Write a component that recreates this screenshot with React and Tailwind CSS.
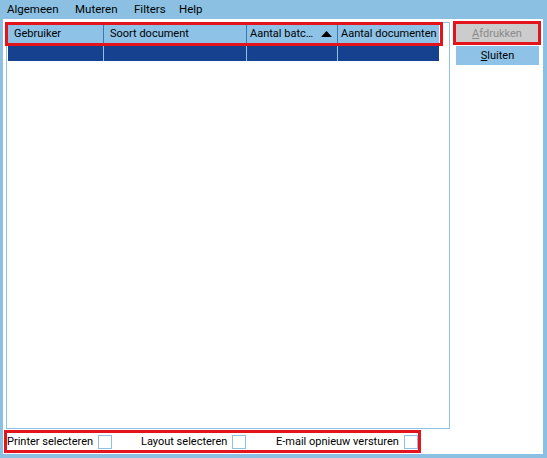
import React from 'react';

const font = { fontFamily: 'Roboto, Lato, sans-serif' };

const columns = [
    { label: 'Gebruiker', width: 'w-[96px]', pad: 'pl-[6px]' },
    { label: 'Soort document', width: 'w-[143px]', pad: 'pl-[6px]' },
    { label: 'Aantal batc…', width: 'w-[91px]', pad: 'pl-[3px]', sorted: true },
    { label: 'Aantal documenten', width: 'w-[101px]', pad: 'pl-[3px]' },
];

const Checkbox = () => (
    <span className="inline-block w-[14px] h-[14px] border border-[#8ec1e4] bg-white ml-[5px] shrink-0 -translate-y-[1px]" />
);

export default function App() {
    return (
        <div className="relative w-[547px] h-[458px] bg-[#8cc0e3] text-[11.5px] text-black overflow-hidden" style={font}>
            {/* Menu */}
            <div className="flex h-[19px] items-center pt-[1px]">
                <div className="ml-[7px] w-[68px]">Algemeen</div>
                <div className="w-[59px]">Muteren</div>
                <div className="w-[45px]">Filters</div>
                <div>Help</div>
            </div>

            {/* Inhoud */}
            <div className="ml-[3px] w-[540px] h-[435px] bg-white flex flex-col text-[11px]">
                <div className="flex">
                    <div className="mt-[3px] ml-[3px] w-[444px] h-[407px] border border-[#8ec1e4] pl-[1px]">
                        <div className="flex h-[22px] bg-[#8ec2e6] w-[431px]">
                            {columns.map((col, i) => (
                                <div
                                    key={col.label}
                                    className={`${col.width} ${col.pad} flex items-center whitespace-nowrap overflow-hidden ${i < columns.length - 1 ? 'border-r border-[#3a7ab3]' : ''}`}
                                >
                                    <span>{col.label}</span>
                                    {col.sorted && (
                                        <svg width="11" height="6" viewBox="0 0 11 6" className="ml-[8px] shrink-0">
                                            <polygon points="5.5,0 11,6 0,6" fill="#000" />
                                        </svg>
                                    )}
                                </div>
                            ))}
                        </div>
                        <div className="flex h-[15px] mt-[1px] bg-[#15418e] w-[431px]">
                            {columns.map((col, i) => (
                                <div
                                    key={col.label}
                                    className={`${col.width} ${i < columns.length - 1 ? 'border-r border-[#8ec1e4]' : ''}`}
                                />
                            ))}
                        </div>
                    </div>

                    <div className="ml-[6px] mt-[5px] flex flex-col gap-[3px]">
                        <div className="w-[82px] h-[19px] bg-[#cccccc] text-[#8a8a8a] flex items-center justify-center pt-[1px]">
                            <span><span className="underline">A</span>fdrukken</span>
                        </div>
                        <div className="w-[83px] h-[19px] bg-[#8ec2e6] flex items-center justify-center pt-[2px]">
                            <span><span className="underline">S</span>luiten</span>
                        </div>
                    </div>
                </div>

                <div className="flex items-center h-[24px] mt-[2px]">
                    <div className="ml-[4px] w-[134px] flex items-center whitespace-nowrap">
                        Printer selecteren<Checkbox />
                    </div>
                    <div className="w-[135px] flex items-center whitespace-nowrap">
                        Layout selecteren<Checkbox />
                    </div>
                    <div className="flex items-center whitespace-nowrap">
                        E-mail opnieuw versturen<Checkbox />
                    </div>
                </div>
            </div>

            {/* Markeringen */}
            <div className="absolute left-[5px] top-[22px] w-[438px] h-[24px] border-[3px] border-[#e3141c]" />
            <div className="absolute left-[453px] top-[21px] w-[88px] h-[24px] border-[3px] border-[#e3141c]" />
            <div className="absolute left-[4px] top-[430px] w-[417px] h-[23px] border-[3px] border-[#e3141c]" />
        </div>
    );
}
